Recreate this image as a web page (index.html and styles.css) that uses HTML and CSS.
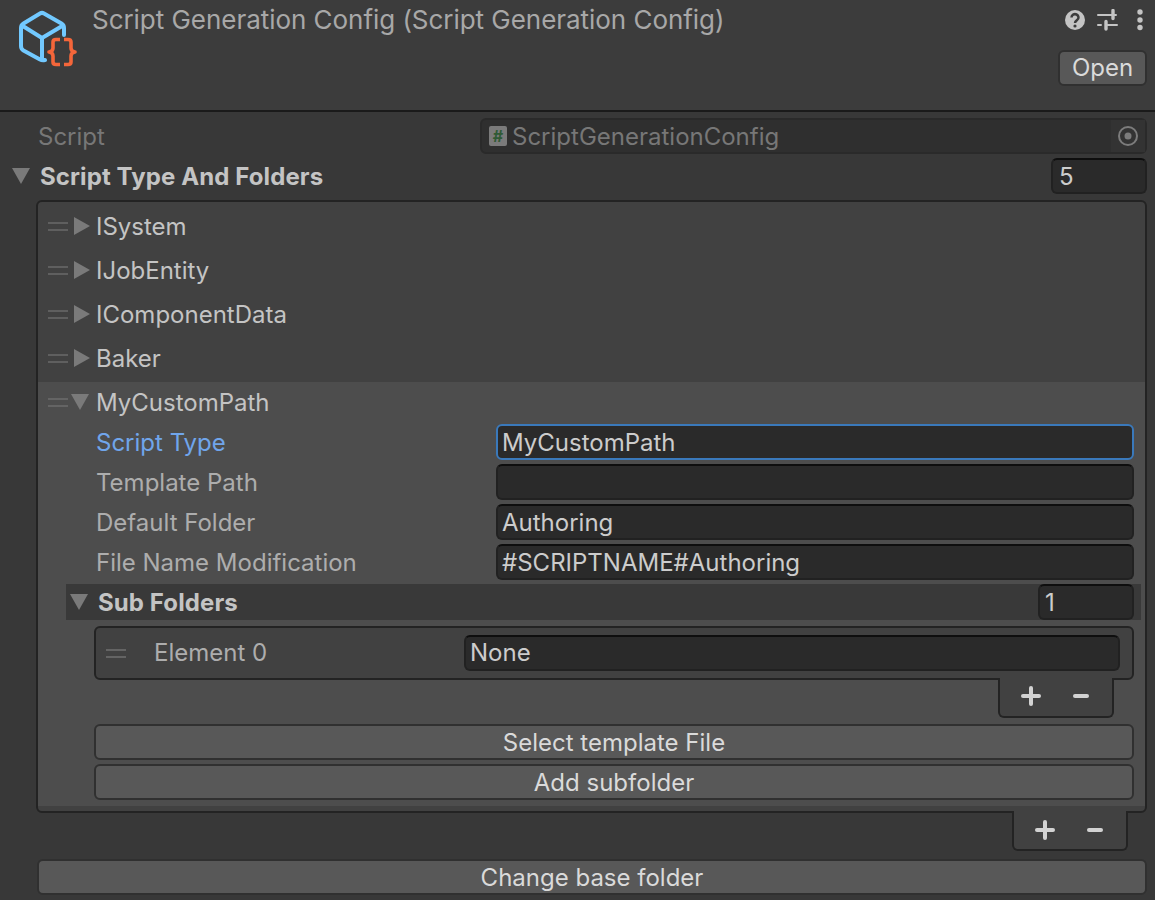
FILE: index.html
```html
<!DOCTYPE html>
<html lang="en">
<head>
    <meta charset="UTF-8">
    <meta name="viewport" content="width=device-width, initial-scale=1.0">
    <title>Script Generation Config</title>
    <link rel="stylesheet" href="styles.css">
</head>
<body>
    <header class="header">
        <svg class="asset-icon" width="60" height="58" viewBox="0 0 60 58" fill="none">
            <path d="M46 25V18q0-3-2.500-4.500L26 3.500q-2-1.200-4 0L5.500 13.500Q3 15 3 18V36q0 3 2.500 4.500L22 49.500q2 1 5 .5M4 15.500L24 28L45 15.500M24 28V48" stroke="#72c9ff" stroke-width="4" stroke-linecap="round" stroke-linejoin="round"/>
            <path d="M42 29.500H38q-3 0-3 2.500v6q0 3.500-4 4 4 .5 4 4v6q0 2.500 3 2.500h4M46 29.500h4q3 0 3 2.500v6q0 3.500 4 4-4 .5-4 4v6q0 2.500-3 2.500h-4" stroke="#f4663a" stroke-width="3.600" stroke-linejoin="round"/>
        </svg>
        <div class="title">Script Generation Config (Script Generation Config)</div>
        <div class="header-side">
            <div class="header-tools">
                <svg width="22" height="22" viewBox="0 0 22 22">
                    <circle cx="11" cy="11" r="10" fill="#c4c4c4"/>
                    <path d="M7.500 8.500a3.500 3.300 0 1 1 5.600 2.600c-1.300 1-2.100 1.500-2.100 3" fill="none" stroke="#3c3c3c" stroke-width="2.500"/>
                    <circle cx="11" cy="17" r="1.600" fill="#3c3c3c"/>
                </svg>
                <svg class="sliders" width="22" height="22" viewBox="0 0 22 22" fill="none" stroke="#c4c4c4" stroke-linecap="round">
                    <path d="M1 6h18M1 16h3M10 16h10" stroke-width="2"/>
                    <path d="M16 1.500v8M9 12.500v7.500" stroke-width="3.400"/>
                </svg>
                <svg width="8" height="22" viewBox="0 0 8 22" fill="#c4c4c4">
                    <circle cx="4" cy="3" r="2.700"/>
                    <circle cx="4" cy="11" r="2.700"/>
                    <circle cx="4" cy="18.500" r="2.700"/>
                </svg>
            </div>
            <button class="btn open-btn">Open</button>
        </div>
    </header>

    <main class="inspector">
        <div class="row script-row">
            <span class="label">Script</span>
            <div class="object-field">
                <span class="script-badge">#</span>
                <span class="object-name">ScriptGenerationConfig</span>
                <span class="picker"><svg width="22" height="22" viewBox="0 0 22 22" fill="none"><circle cx="11" cy="11" r="9" stroke="#7c7c7c" stroke-width="2"/><circle cx="11" cy="11" r="3.500" fill="#7c7c7c"/></svg></span>
            </div>
        </div>

        <div class="row foldout-row">
            <span class="tri tri-down"></span>
            <span class="bold-label">Script Type And Folders</span>
            <div class="field count-field">5</div>
        </div>

        <div class="list">
            <div class="item"><span class="grip"></span><span class="tri tri-right"></span><span class="item-name">ISystem</span></div>
            <div class="item"><span class="grip"></span><span class="tri tri-right"></span><span class="item-name">IJobEntity</span></div>
            <div class="item"><span class="grip"></span><span class="tri tri-right"></span><span class="item-name">IComponentData</span></div>
            <div class="item"><span class="grip"></span><span class="tri tri-right"></span><span class="item-name">Baker</span></div>

            <div class="expanded">
                <div class="item"><span class="grip"></span><span class="tri tri-down tri-open"></span><span class="item-name">MyCustomPath</span></div>

                <div class="prop">
                    <span class="prop-label active">Script Type</span>
                    <div class="field prop-field focused">MyCustomPath</div>
                </div>
                <div class="prop">
                    <span class="prop-label">Template Path</span>
                    <div class="field prop-field"></div>
                </div>
                <div class="prop">
                    <span class="prop-label">Default Folder</span>
                    <div class="field prop-field">Authoring</div>
                </div>
                <div class="prop">
                    <span class="prop-label">File Name Modification</span>
                    <div class="field prop-field">#SCRIPTNAME#Authoring</div>
                </div>

                <div class="sub-header">
                    <span class="tri tri-down"></span>
                    <span class="bold-label">Sub Folders</span>
                    <div class="field sub-count">1</div>
                </div>

                <div class="sub-list">
                    <span class="grip"></span>
                    <span class="element-label">Element 0</span>
                    <div class="field element-field">None</div>
                </div>
                <div class="footer-wrap sub-footer-wrap">
                    <div class="list-footer"><span class="plus"></span><span class="minus"></span></div>
                </div>

                <button class="btn sub-btn">Select template File</button>
                <button class="btn sub-btn">Add subfolder</button>
            </div>
        </div>
        <div class="footer-wrap outer-footer-wrap">
            <div class="list-footer"><span class="plus"></span><span class="minus"></span></div>
        </div>

        <button class="btn base-btn">Change base folder</button>
    </main>
</body>
</html>
```

FILE: styles.css
```css
* {
    box-sizing: border-box;
}

body {
    margin: 0;
    height: 900px;
    overflow: hidden;
    background: #383838;
    color: #c4c4c4;
    font-family: Inter, "Noto Sans", sans-serif;
    font-size: 24px;
    line-height: 36px;
}

.header {
    display: flex;
    height: 112px;
    background: #3c3c3c;
    border-bottom: 2px solid #1a1a1a;
}

.asset-icon {
    flex: none;
    margin: 10px 0 0 18px;
}

.title {
    flex: 1;
    margin: 2px 0 0 14px;
    font-size: 26px;
    letter-spacing: -0.04px;
    color: #a8a8a8;
}

.header-side {
    display: flex;
    flex-direction: column;
    align-items: flex-end;
    padding: 9px 8px 0 0;
}

.header-tools {
    display: flex;
    gap: 11px;
    margin-right: 3px;
}

.sliders {
    margin-right: 6px;
}

.btn {
    display: block;
    height: 36px;
    padding: 0;
    background: #585858;
    border: 2px solid #303030;
    border-radius: 6px;
    color: #dadada;
    font: inherit;
    line-height: 34px;
    text-align: center;
}

.open-btn {
    width: 89px;
    margin-top: 19px;
    line-height: 32px;
}

.inspector {
    padding: 0 8px 0 0;
}

.row {
    display: flex;
    align-items: center;
}

.script-row {
    height: 36px;
    margin-top: 6px;
    padding-left: 38px;
}

.label {
    width: 442px;
    padding-top: 2px;
    color: #777;
}

.object-field {
    display: flex;
    align-items: center;
    flex: 1;
    height: 36px;
    padding-left: 7px;
    background: #2f2f2f;
    border: 2px solid #2a2a2a;
    border-radius: 6px;
    color: #777;
}

.script-badge {
    width: 18px;
    height: 20px;
    margin-right: 5px;
    background: #7b7b7b;
    border-radius: 2px;
    color: #2f5a35;
    font-size: 16px;
    font-weight: 700;
    line-height: 20px;
    text-align: center;
}

.object-name {
    flex: 1;
    padding-top: 2px;
}

.picker {
    display: flex;
    align-items: center;
    justify-content: center;
    width: 34px;
    height: 32px;
    background: #333;
}

.foldout-row {
    height: 36px;
    margin-top: 4px;
    padding-left: 12px;
}

.bold-label {
    flex: 1;
    padding-top: 2px;
    font-weight: 700;
    letter-spacing: 0.1px;
}

.foldout-row .bold-label {
    margin-left: 10px;
}

.tri {
    display: block;
    flex: none;
    width: 0;
    height: 0;
}

.tri-down {
    border-left: 9px solid transparent;
    border-right: 9px solid transparent;
    border-top: 16px solid #7a7a7a;
}

.tri-right {
    margin-left: 6px;
    border-top: 9px solid transparent;
    border-bottom: 9px solid transparent;
    border-left: 16px solid #7a7a7a;
}

.tri-open {
    margin-left: 3px;
    margin-right: 1px;
}

.field {
    height: 36px;
    padding-left: 4px;
    background: #2a2a2a;
    border: 2px solid #212121;
    border-top-color: #0e0e0e;
    border-radius: 6px;
    color: #cccccc;
    line-height: 33px;
}

.count-field {
    width: 96px;
    padding-left: 6px;
}

.list {
    height: 613px;
    margin: 6px 0 0 36px;
    padding-top: 2px;
    background: #414141;
    border: 2px solid #232323;
    border-radius: 6px;
    overflow: hidden;
}

.item {
    display: flex;
    align-items: center;
    height: 44px;
    padding-left: 10px;
}

.grip {
    display: block;
    flex: none;
    width: 20px;
    height: 9px;
    border-top: 2px solid #5f5f5f;
    border-bottom: 2px solid #5f5f5f;
}

.item-name {
    margin-left: 6px;
    padding-top: 2px;
}

.expanded {
    height: 424px;
    margin-top: 2px;
    background: #4d4d4d;
}

.expanded .grip {
    border-color: #646464;
}

.expanded .item {
    height: 40px;
}

.prop {
    display: flex;
    align-items: center;
    height: 40px;
    padding: 0 11px 0 58px;
}

.prop-label {
    width: 400px;
    padding-top: 2px;
    color: #adadad;
}

.prop-label.active {
    color: #70a5eb;
}

.prop-field {
    flex: 1;
}

.focused {
    background: #2a2a2a;
    border-color: #3a79bb;
}

.sub-header {
    display: flex;
    align-items: center;
    height: 36px;
    margin: 2px 4px 0 28px;
    padding: 0 7px 0 4px;
    background: #393939;
}

.sub-header .bold-label {
    margin-left: 10px;
}

.sub-count {
    width: 96px;
    padding-left: 5px;
}

.sub-list {
    display: flex;
    align-items: center;
    height: 54px;
    margin: 6px 11px 0 56px;
    padding: 0 12px 0 10px;
    background: #414141;
    border: 2px solid #232323;
    border-radius: 6px;
}

.element-label {
    width: 310px;
    margin-left: 28px;
    color: #adadad;
}

.element-field {
    flex: 1;
    line-height: 31px;
}

.footer-wrap {
    display: flex;
    justify-content: flex-end;
    margin-top: -2px;
}

.sub-footer-wrap {
    margin-right: 31px;
}

.outer-footer-wrap {
    position: relative;
    margin-right: 19px;
}

.list-footer {
    position: relative;
    width: 116px;
    height: 40px;
    background: #414141;
    border: 2px solid #232323;
    border-top: 0;
    border-radius: 0 0 6px 6px;
}

.plus,
.minus {
    position: absolute;
    top: 17px;
    height: 4px;
    background: #d2d2d2;
    border-radius: 2px;
}

.sub-footer-wrap .plus,
.sub-footer-wrap .minus {
    top: 16px;
}

.plus {
    left: 21px;
    width: 20px;
}

.plus::after {
    content: "";
    position: absolute;
    left: 8px;
    top: -8px;
    width: 4px;
    height: 20px;
    background: #d2d2d2;
    border-radius: 2px;
}

.minus {
    left: 73px;
    width: 16px;
}

.sub-btn {
    width: 1040px;
    margin: 4px 0 0 56px;
}

.sub-footer-wrap + .sub-btn {
    margin-top: 6px;
}

.base-btn {
    width: 1110px;
    margin: 8px 0 0 37px;
}
```
